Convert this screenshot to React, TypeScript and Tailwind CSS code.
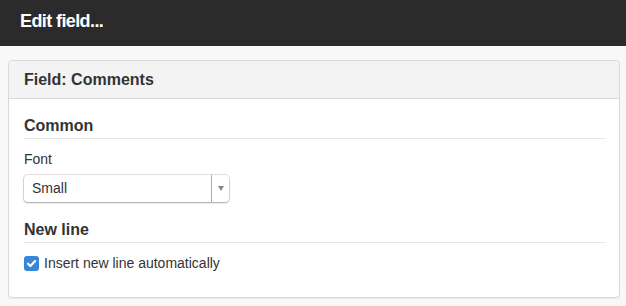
import React from "react";

export default function App() {
  return (
    <div className="h-[306px] w-[626px] bg-[#f8f8f8] font-['Helvetica','Liberation_Sans',Arial,sans-serif] text-[#333]">
      <div className="h-[46px] bg-[#2b2b2b] px-[20px] pt-[10px]">
        <h1 className="text-[18px] leading-[22px] font-bold tracking-[-0.6px] text-white">Edit field...</h1>
      </div>
      <div className="pl-[8px] pr-[6px] pt-[14px]">
        <div className="rounded-[4px] border border-[#dadada] bg-white shadow-[0_1px_1px_rgba(0,0,0,0.06)]">
          <div className="flex h-[38px] items-center rounded-t-[4px] border-b border-[#dadada] bg-[#f3f3f3] px-[15px]">
            <span className="text-[16px] font-bold">Field: Comments</span>
          </div>
          <div className="pb-[24px] pl-[15px] pr-[13px] pt-[17px]">
            <div className="border-b border-[#e6e6e6] pb-[2px] text-[16px] leading-[20px] font-bold">Common</div>
            <div className="mt-[10px] text-[14px] leading-[20px]">Font</div>
            <div className="mt-[6px] flex h-[27px] w-[205px] items-center rounded-[4px] bg-white shadow-[0_0_0_1px_rgba(0,0,0,0.12),0_1px_2px_rgba(0,0,0,0.25)]">
              <span className="flex-1 pl-[8px] text-[14px]">Small</span>
              <div className="flex h-full w-[18px] items-center justify-center border-l border-[#aaa]">
                <span className="h-0 w-0 border-x-[3.5px] border-t-[5px] border-x-transparent border-t-[#888]" />
              </div>
            </div>
            <div className="mt-[18px] border-b border-[#e6e6e6] pb-[2px] text-[16px] leading-[20px] font-bold">New line</div>
            <label className="mt-[10px] flex items-center gap-[5px] text-[14px] leading-[20px]">
              <span className="flex h-[15px] w-[15px] items-center justify-center rounded-[3px] bg-[#3a86d6]">
                <svg width="11" height="11" viewBox="0 0 10 10">
                  <path d="M1.8 5.2 L4 7.3 L8.3 2.8" fill="none" stroke="white" strokeWidth="2" strokeLinecap="round" strokeLinejoin="round" />
                </svg>
              </span>
              Insert new line automatically
            </label>
          </div>
        </div>
      </div>
    </div>
  );
}
